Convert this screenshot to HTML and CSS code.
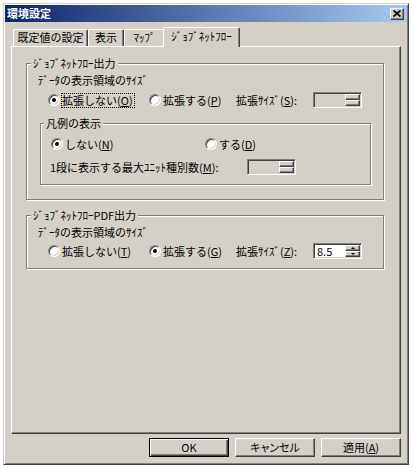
FILE: index.html
```html
<!DOCTYPE html>
<html lang="ja">
<head>
<meta charset="utf-8">
<title>環境設定</title>
<link rel="stylesheet" href="styles.css">
</head>
<body>
<div class="window">
  <div class="titlebar">
    <span class="title">環境設定</span>
    <span class="close"><svg width="8" height="7" viewBox="0 0 8 7"><path d="M0.5 0.5 L7.5 6.5 M7.5 0.5 L0.5 6.5" stroke="#000" stroke-width="1.8" fill="none"/></svg></span>
  </div>
  <div class="tabs">
    <div class="tab t1">既定値の設定</div>
    <div class="tab t2">表示</div>
    <div class="tab t3">ﾏｯﾌﾟ</div>
    <div class="tab sel">ｼﾞｮﾌﾞﾈｯﾄﾌﾛｰ</div>
  </div>
  <div class="panel">
    <div class="group g1">
      <div class="gtitle">ｼﾞｮﾌﾞﾈｯﾄﾌﾛｰ出力</div>
      <div class="label">ﾃﾞｰﾀの表示領域のｻｲｽﾞ</div>
      <div class="row">
        <div class="opt w1"><span class="radio on"></span><span class="txt focus">拡張しない(<u>O</u>)</span></div>
        <div class="opt w2"><span class="radio"></span><span class="txt">拡張する(<u>P</u>)</span></div>
        <div class="slabel">拡張ｻｲｽﾞ(<u>S</u>):</div>
        <div class="spin"><div class="field"></div><div class="arrows"><span class="ab up"></span><span class="ab dn"></span></div></div>
      </div>
      <div class="group inner">
        <div class="gtitle">凡例の表示</div>
        <div class="row r1">
          <div class="opt w3"><span class="radio on"></span><span class="txt">しない(<u>N</u>)</span></div>
          <div class="opt"><span class="radio"></span><span class="txt">する(<u>D</u>)</span></div>
        </div>
        <div class="row r2">
          <div class="mlabel">1段に表示する最大ﾕﾆｯﾄ種別数(<u>M</u>):</div>
          <div class="spin"><div class="field"></div><div class="arrows"><span class="ab up"></span><span class="ab dn"></span></div></div>
        </div>
      </div>
    </div>
    <div class="group g2">
      <div class="gtitle">ｼﾞｮﾌﾞﾈｯﾄﾌﾛｰPDF出力</div>
      <div class="label">ﾃﾞｰﾀの表示領域のｻｲｽﾞ</div>
      <div class="row">
        <div class="opt w1"><span class="radio"></span><span class="txt">拡張しない(<u>T</u>)</span></div>
        <div class="opt w2"><span class="radio on"></span><span class="txt">拡張する(<u>G</u>)</span></div>
        <div class="slabel">拡張ｻｲｽﾞ(<u>Z</u>):</div>
        <div class="spin en"><div class="field">8.5</div><div class="arrows"><span class="ab up"></span><span class="ab dn"></span></div></div>
      </div>
    </div>
  </div>
  <div class="buttons">
    <div class="btn def">OK</div>
    <div class="btn cancel">キャンセル</div>
    <div class="btn">適用(<u>A</u>)</div>
  </div>
</div>
</body>
</html>
```
FILE: styles.css
```css
* { box-sizing: border-box; }
html, body { margin: 0; padding: 0; background: #fff; }
body {
  font-family: "Noto Sans CJK JP", "Noto Sans", sans-serif;
  font-size: 11px;
  line-height: 13px;
  color: #000;
}
u { text-decoration: underline; text-underline-offset: 1px; }

.window {
  margin: 3px 0 0 3px;
  width: 406px;
  height: 462px;
  background: #d4d0c8;
  border: 1px solid;
  border-color: #d4d0c8 #404040 #404040 #d4d0c8;
  box-shadow: inset 1px 1px #fff, inset -1px -1px #808080;
  padding: 1px;
  display: flex;
  flex-direction: column;
}

.titlebar {
  height: 17px;
  flex: none;
  background: linear-gradient(to right, #0a246a, #a6caf0);
  display: flex;
  align-items: center;
  justify-content: space-between;
  padding: 0 3px 0 2px;
}
.title { color: #fff; font-weight: bold; }
.close {
  width: 14px;
  height: 12px;
  background: #d4d0c8;
  border: 1px solid;
  border-color: #fff #404040 #404040 #fff;
  box-shadow: inset -1px -1px #808080;
  display: flex;
  align-items: center;
  justify-content: center;
}
.close svg { display: block; }

.tabs {
  display: flex;
  align-items: flex-end;
  margin-top: 5px;
  padding-left: 8px;
  height: 19px;
  flex: none;
}
.tab {
  height: 17px;
  border: 1px solid;
  border-bottom: none;
  border-color: #fff #404040 transparent #fff;
  box-shadow: inset -1px 0 #808080;
  border-radius: 2px 2px 0 0;
  text-align: center;
  line-height: 15px;
  white-space: nowrap;
}
.t1 { width: 75px; }
.t2 { width: 36px; }
.t3 { width: 41px; }
.tab.sel {
  width: 77px;
  height: 20px;
  margin: 0 -2px -1px -2px;
  background: #d4d0c8;
  position: relative;
  z-index: 1;
  line-height: 16px;
}

.panel {
  flex: none;
  margin-left: 6px;
  width: 390px;
  height: 388px;
  border: 1px solid;
  border-color: #fff #404040 #404040 #fff;
  box-shadow: inset -1px -1px #808080;
  padding: 16px 0 0 14px;
}

.group {
  border: 1px solid #808080;
  box-shadow: inset 1px 1px #fff, 1px 1px #fff;
}
.g1 { width: 358px; padding: 0 0 14px 11px; }
.g2 { width: 358px; margin-top: 15px; padding: 0 0 9px 11px; }
.gtitle {
  width: fit-content;
  margin: -7px 0 0 -7px;
  padding: 0 2px;
  background: #d4d0c8;
  white-space: nowrap;
}
.inner {
  width: 331px;
  margin-top: 15px;
  margin-left: 2px;
  padding: 0 0 9px 9px;
}
.inner .gtitle { margin-left: -6px; }

.label { margin-top: 4px; white-space: nowrap; }
.row {
  display: flex;
  align-items: center;
  height: 16px;
  margin-top: 5px;
}
.g2 .row { margin-top: 4px; }
.inner .r1 { margin-top: 6px; }
.inner .r2 { margin-top: 7px; }

.opt { display: flex; align-items: center; white-space: nowrap; }
.w1 { width: 101px; margin-left: 10px; }
.w2 { width: 87px; }
.w3 { width: 154px; margin-left: 1px; }
.slabel { width: 77px; white-space: nowrap; }
.mlabel { width: 197px; white-space: nowrap; }

.radio {
  flex: none;
  width: 12px;
  height: 12px;
  border-radius: 50%;
  background: #fff;
  border: 1px solid;
  border-color: #808080 #fff #fff #808080;
  box-shadow: inset 1px 1px #404040, inset -1px -1px #d4d0c8;
  margin-right: 1px;
  display: flex;
  align-items: center;
  justify-content: center;
}
.radio.on::after {
  content: "";
  width: 4px;
  height: 4px;
  border-radius: 50%;
  background: #000;
}
.txt {
  border: 1px dotted transparent;
  padding: 0 1px 0 0;
}
.txt.focus { border-color: #000; }

.spin {
  flex: none;
  width: 49px;
  height: 16px;
  border: 1px solid;
  border-color: #808080 #fff #fff #808080;
  box-shadow: inset 1px 1px #404040, inset -1px -1px #d4d0c8;
  padding: 1px;
  display: flex;
  background: #d4d0c8;
}
.spin.en { background: #fff; }
.field {
  flex: 1;
  padding-left: 2px;
  line-height: 12px;
}
.arrows {
  width: 15px;
  display: flex;
  flex-direction: column;
}
.ab {
  flex: 1;
  background: #d4d0c8;
  border: 1px solid;
  border-color: #fff #404040 #404040 #fff;
  box-shadow: inset -1px -1px #808080;
  display: flex;
  align-items: center;
  justify-content: center;
}
.en .up::after {
  content: "";
  border-left: 2px solid transparent;
  border-right: 2px solid transparent;
  border-bottom: 2px solid #000;
}
.en .dn::after {
  content: "";
  border-left: 2px solid transparent;
  border-right: 2px solid transparent;
  border-top: 2px solid #000;
}

.buttons {
  flex: none;
  display: flex;
  justify-content: flex-end;
  gap: 6px;
  margin-top: 4px;
  padding-right: 6px;
}
.btn {
  width: 80px;
  height: 19px;
  border: 1px solid;
  border-color: #fff #404040 #404040 #fff;
  box-shadow: inset -1px -1px #808080;
  display: flex;
  align-items: center;
  justify-content: center;
  white-space: nowrap;
}
.btn.def {
  border-color: #000;
  box-shadow: inset 1px 1px #fff, inset -1px -1px #404040, inset -2px -2px #808080;
}
.btn.cancel { font-feature-settings: "palt"; }
```
